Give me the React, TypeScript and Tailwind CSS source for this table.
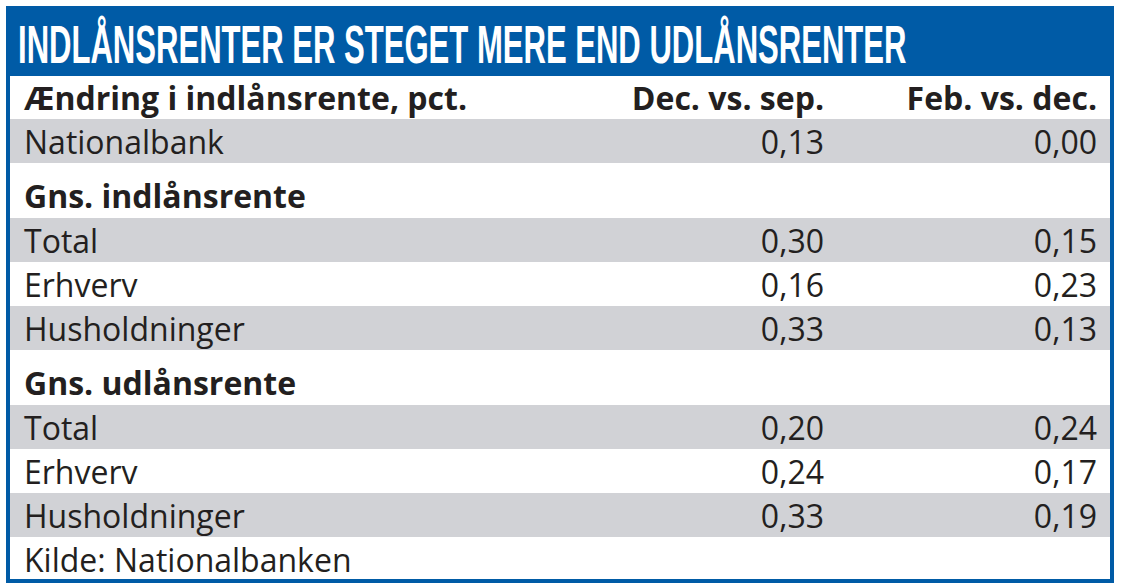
import React from "react";

type Row =
  | { kind: "data"; label: string; a: string; b: string; gray: boolean }
  | { kind: "section"; label: string };

const rows: Row[] = [
  { kind: "data", label: "Nationalbank", a: "0,13", b: "0,00", gray: true },
  { kind: "section", label: "Gns. indlånsrente" },
  { kind: "data", label: "Total", a: "0,30", b: "0,15", gray: true },
  { kind: "data", label: "Erhverv", a: "0,16", b: "0,23", gray: false },
  { kind: "data", label: "Husholdninger", a: "0,33", b: "0,13", gray: true },
  { kind: "section", label: "Gns. udlånsrente" },
  { kind: "data", label: "Total", a: "0,20", b: "0,24", gray: true },
  { kind: "data", label: "Erhverv", a: "0,24", b: "0,17", gray: false },
  { kind: "data", label: "Husholdninger", a: "0,33", b: "0,19", gray: true },
];

export default function App() {
  return (
    <div className="w-[1121px] h-[588px] bg-white pt-[6px] pl-[6px] font-['Open_Sans',sans-serif] text-[#231f20]">
      <div className="w-[1108px] h-[577px] border-[4px] border-[#005ba6] flex flex-col">
        <div className="h-[66px] bg-[#005ba6] flex items-center pl-[8px] overflow-hidden shrink-0">
          <span className="inline-block origin-left scale-x-[0.575] whitespace-nowrap text-white font-['Liberation_Sans',sans-serif] font-bold text-[54px] leading-none pt-[2px]">
            INDLÅNSRENTER ER STEGET MERE END UDLÅNSRENTER
          </span>
        </div>
        <div className="h-[43px] flex items-center pr-[13px] pl-[14px] text-[32px] font-bold shrink-0">
          <div className="flex-1 whitespace-nowrap">Ændring i indlånsrente, pct.</div>
          <div className="w-[300px] text-right">Dec. vs. sep.</div>
          <div className="w-[273px] text-right">Feb. vs. dec.</div>
        </div>
        {rows.map((r, i) =>
          r.kind === "section" ? (
            <div key={i} className="h-[55px] flex items-center pt-[11px] pl-[14px] text-[32px] font-bold shrink-0">
              {r.label}
            </div>
          ) : (
            <div
              key={i}
              className={`h-[44px] flex items-center pt-[1px] pr-[13px] pl-[14px] text-[32px] shrink-0 ${r.gray ? "bg-[#d1d2d6]" : "bg-white"}`}
            >
              <div className="flex-1 whitespace-nowrap">{r.label}</div>
              <div className="w-[300px] text-right">{r.a}</div>
              <div className="w-[273px] text-right">{r.b}</div>
            </div>
          )
        )}
        <div className="h-[42px] flex items-center pt-[3px] pl-[14px] text-[32px] shrink-0">
          Kilde: Nationalbanken
        </div>
      </div>
    </div>
  );
}
